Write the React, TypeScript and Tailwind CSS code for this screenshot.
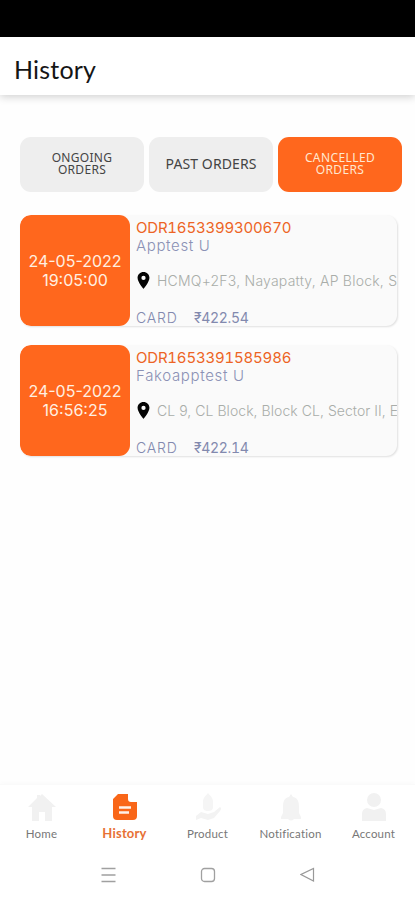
import React, { useState } from 'react';

interface Order {
  id: string;
  date: string;
  time: string;
  customer: string;
  address: string;
  addressSpacing: string;
  payment: string;
  amount: string;
}

const orders: Order[] = [
  {
    id: 'ODR1653399300670',
    date: '24-05-2022',
    time: '19:05:00',
    customer: 'Apptest U',
    address: 'HCMQ+2F3, Nayapatty, AP Block, S',
    addressSpacing: 'tracking-[0.22px]',
    payment: 'CARD',
    amount: '₹422.54',
  },
  {
    id: 'ODR1653391585986',
    date: '24-05-2022',
    time: '16:56:25',
    customer: 'Fakoapptest U',
    address: 'CL 9, CL Block, Block CL, Sector II, E',
    addressSpacing: 'tracking-[0.05px]',
    payment: 'CARD',
    amount: '₹422.14',
  },
];

const tabs = [
  { id: 'ongoing', label: 'ONGOING ORDERS', text: 'px-7 text-[12px] leading-3 tracking-[0.3px]' },
  { id: 'past', label: 'PAST ORDERS', text: 'text-[14px] leading-4 tracking-[0.1px] whitespace-nowrap' },
  { id: 'cancelled', label: 'CANCELLED ORDERS', text: 'px-6 text-[12px] leading-3 tracking-[0.4px]' },
];

function OrderCard({ order }: { order: Order }) {
  return (
    <div className="flex h-[111px] w-[377px] overflow-hidden rounded-[11px] bg-[#fafafa] font-['Inter','Liberation_Sans',sans-serif] shadow-[1px_1px_2px_rgba(0,0,0,0.12)]">
      {/* Date */}
      <div className="flex w-[110px] shrink-0 flex-col items-center justify-center rounded-[11px] bg-[#ff671d] text-[16px] leading-[19px] text-[#fff0e2]">
        <span>{order.date}</span>
        <span>{order.time}</span>
      </div>

      {/* Details */}
      <div className="min-w-0 flex-1 pt-[3px] pl-1.5 whitespace-nowrap">
        <div className="text-[15px] leading-[19px] tracking-[-0.2px] text-[#ed6424] tabular-nums">{order.id}</div>
        <div className="text-[15px] leading-[18px] font-light tracking-[0.65px] text-[#8b91b5]">{order.customer}</div>
        <div className="mt-[15px] flex h-5 items-center">
          <svg viewBox="0 0 14 20" className="ml-[1px] h-[17px] w-[13px] shrink-0">
            <path
              fill="#050505"
              fillRule="evenodd"
              d="M7 0C3.1 0 0 3 0 6.9C0 12.1 7 20 7 20S14 12.1 14 6.9C14 3 10.9 0 7 0ZM7 4.5A2.5 2.5 0 1 1 7 9.5A2.5 2.5 0 0 1 7 4.5Z"
            />
          </svg>
          <span className={`ml-[7px] text-[14px] font-light text-[#a9ada9] ${order.addressSpacing}`}>
            {order.address}
          </span>
        </div>
        <div className="mt-[19px] flex text-[14px] leading-[18px] text-[#8289ae]">
          <span className="w-[58px] font-light tracking-[0.8px]">{order.payment}</span>
          <span className="tracking-[-0.3px] tabular-nums">{order.amount}</span>
        </div>
      </div>
    </div>
  );
}

const navItems = [
  {
    label: 'Home',
    icon: <path fill="#f1f1f1" d="M14 1L28 14H24V28H17V19H11V28H4V14H0L9 5V2H12V3Z" />,
  },
  {
    label: 'History',
    icon: (
      <>
        <path fill="#f96618" d="M7 1H17V6Q17 9 20 9H26V23Q26 27 22 27H6Q2 27 2 23V6Z" />
        <path stroke="#fff1e8" strokeWidth="2.4" fill="none" d="M8 14.5H20M8 19.5H18" />
      </>
    ),
  },
  {
    label: 'Product',
    icon: (
      <>
        <path fill="#f5f5f5" d="M14 0C12 3 9 4 9 9V14C9 17 11 18 14 18S19 17 19 14V9C19 4 16 3 14 0Z" />
        <path fill="#f3f3f3" d="M2 27V23L7 19L14 21L20 19L26 14Q28 15 26 18L20 25L14 27L7 25Z" />
      </>
    ),
  },
  {
    label: 'Notification',
    icon: <path fill="#f3f3f3" d="M14 1L16 4C21 5 22 9 22 14V20L24 24V26H17Q14 29 11 26H4V24L6 20V14C6 9 7 5 12 4Z" />,
  },
  {
    label: 'Account',
    icon: (
      <>
        <circle cx="14" cy="7" r="7" fill="#f1f1f1" />
        <path fill="#f1f1f1" d="M2 28V21Q2 16 7 15L14 17L21 15Q26 16 26 21V28Z" />
      </>
    ),
  },
];

export default function App() {
  const [activeTab, setActiveTab] = useState('cancelled');

  return (
    <div className="flex h-[900px] w-[415px] flex-col overflow-hidden bg-[#fefefe] font-['Lato','Liberation_Sans',sans-serif]">
      {/* Status bar */}
      <div className="h-[37px] shrink-0 bg-black"></div>

      {/* Header */}
      <header className="flex h-[58px] shrink-0 items-center bg-white pt-1.5 pl-3.5 shadow-[0_2px_8px_rgba(0,0,0,0.18)]">
        <h1 className="text-[25px] leading-8 tracking-[0.2px] text-[#151515]">History</h1>
      </header>

      {/* Order filters */}
      <div className="mt-[42px] flex gap-[5px] pl-5">
        {tabs.map((tab) => (
          <button
            key={tab.id}
            type="button"
            onClick={() => setActiveTab(tab.id)}
            className={`flex h-[55px] w-[124px] items-center justify-center rounded-[11px] pb-0.5 font-['Noto_Sans',sans-serif] ${tab.text} ${
              activeTab === tab.id ? 'bg-[#ff671d] text-[#ffe8d0]' : 'bg-[#eeeeee] text-[#444444]'
            }`}
          >
            {tab.label}
          </button>
        ))}
      </div>

      {/* Orders */}
      <main className="mt-[23px] flex flex-1 flex-col gap-[19px] pl-5">
        {orders.map((order) => (
          <OrderCard key={order.id} order={order} />
        ))}
      </main>

      {/* Bottom navigation */}
      <nav className="grid h-[66px] shrink-0 grid-cols-5 border-t border-[#fafafa] bg-white pt-2 shadow-[0_-2px_4px_rgba(0,0,0,0.015)]">
        {navItems.map((item) => (
          <div key={item.label} className="flex flex-col items-center">
            <svg viewBox="0 0 28 28" className="h-7 w-7">
              {item.icon}
            </svg>
            <span
              className={
                item.label === 'History'
                  ? 'mt-1 text-[13px] leading-4 font-bold tracking-[0.2px] text-[#e77135]'
                  : 'mt-[5px] text-[11.5px] leading-4 tracking-[0.2px] text-[#777777]'
              }
            >
              {item.label}
            </span>
          </div>
        ))}
      </nav>

      {/* System navigation */}
      <div className="flex h-[50px] shrink-0 items-center justify-center gap-[84px] bg-white">
        <svg viewBox="0 0 16 16" className="h-4 w-4" fill="none" stroke="#a0a0a0" strokeWidth="1.3">
          <path d="M1.5 1.5H15.5M1.5 8H15.5M1.5 14.5H15.5" />
        </svg>
        <svg viewBox="0 0 16 16" className="h-4 w-4" fill="none" stroke="#a0a0a0" strokeWidth="1.3">
          <rect x="1.5" y="1.5" width="13" height="13" rx="3" />
        </svg>
        <svg viewBox="0 0 16 16" className="h-4 w-4" fill="none" stroke="#999999" strokeWidth="1.2">
          <path d="M13.5 1.5V14L1 7.5Z" />
        </svg>
      </div>
    </div>
  );
}
